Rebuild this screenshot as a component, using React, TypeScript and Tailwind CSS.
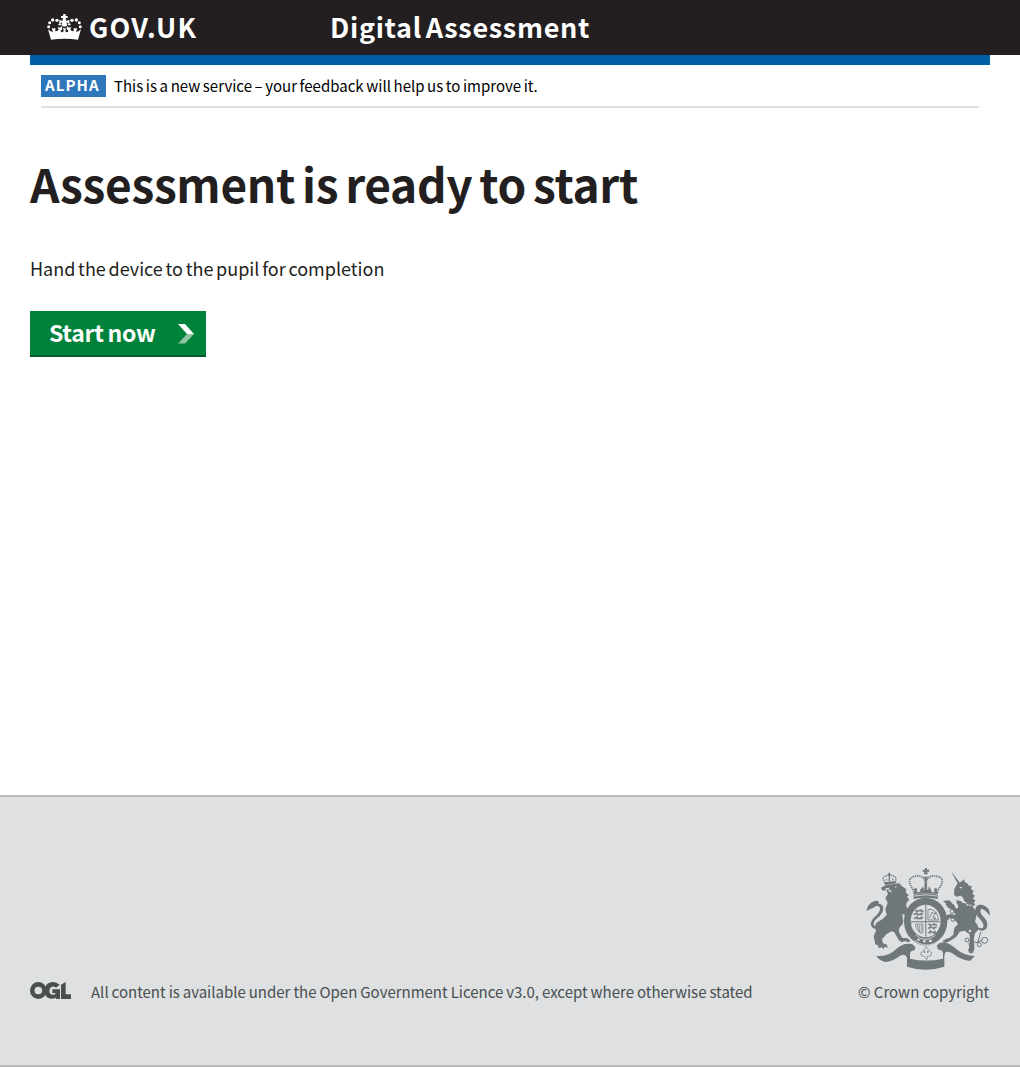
function Crown() {
  return (
    <svg viewBox="0 0 105 78" className="h-[26px] w-[35px] fill-white">
      <path d="M49 0h7v6h6v6h-6l2 9 9-4v12l-9-4 3 7q-2 6-9 6t-9-6l3-7-9 4V17l9 4 2-9h-6V6h6Z" />
      <path d="M12 77 3 45q7 9 15 9l-4-12q6 3 10-1 3 6 0 11 7 0 11-5l-3-8 7 2 5-5q3 6 1 12l-4-1q-1 7 4 8 5 0 5-8l-3-4h11l-3 4q0 8 5 8 5-1 4-8l-4 1q-2-6 1-12l5 5 7-2-3 8q4 5 11 5-3-5 0-11 4 4 10 1l-4 12q8 0 15-9l-9 32q-40-5-81 0Z" />
      <circle cx="5" cy="38" r="4.500" /><circle cx="8" cy="26" r="4.500" /><circle cx="17" cy="18" r="5" /><circle cx="30" cy="19" r="5" /><circle cx="38" cy="31" r="3.500" />
      <circle cx="100" cy="38" r="4.500" /><circle cx="97" cy="26" r="4.500" /><circle cx="88" cy="18" r="5" /><circle cx="75" cy="19" r="5" /><circle cx="67" cy="31" r="3.500" />
    </svg>
  );
}

function OglLogo() {
  return (
    <svg viewBox="0 0 123 51" className="h-[17px] w-[41px] shrink-0 fill-[#484f4f]">
      <path fillRule="evenodd" d="M25 0a25 25.500 0 1 0 0 51 25 25.500 0 0 0 0-51Zm0 14a11.500 11.500 0 1 1 0 23 11.500 11.500 0 0 1 0-23Z" />
      <path d="M89 8 78 17q-6-5-12-3-8 3-8 12 0 12 12 12 4 0 6-2v-3h-9V22h23v29H78l-1-4Q67 53 55 48 44 42 44 26 44 8 58 2 75-4 89 8Z" />
      <path d="M93 8 107 0v37h16v14H93Z" />
    </svg>
  );
}

function RoyalArms() {
  return (
    <svg viewBox="30 21 378 312" className="h-[104px] w-[126px] fill-[#6f777b]">
      {/* lion, with its small crown */}
      <g>
        <path d="M90 70 84 55q5-9 18-9 14-1 21 8l-1 13Z" fill="none" stroke="#6f777b" strokeWidth="3.500" strokeDasharray="5 2" />
        <path d="m89 67 33-4v7l-32 5ZM101 38h4v26h-4ZM98 41h10v3H98ZM92 56l5 3-2 5ZM112 54l4 4-5 5Z" />
        <path d="m83 80 12-5 38-5 8 9 13 9-2 8 9 10-5 4 7 10-7 5-3 13 10 16 9 27 7 7-4 14-14-9-12-28-7-4 1 13q6 14-5 24-9 7-5 20l9 16 16 1 9 8-8 4-9-4-10 4-9-7-13-23-9-3-15 9-13 15 3 12 12 4 2 10-9-4-3 7-6-5-9 3-1-8-9-4-5-24 7-17-4-11 5-13 19-11 12-12-4-17 7-20-7-14 8-12-5-12-11 2-5-9Z" />
        <path d="M78 203q-17 9-27-1-10-13 7-30 19-16 17-28-2-9-13-5-7 5-28 14 5-23 24-30 16-4 13 8 14 2 14 13 0 16-18 30-16 14-9 23 7 5 19-2Z" />
        <path d="m91 85 13-2-4 6 7 2 4 6-7-2-6-6-7-1ZM119 80l8-2-7 6Z" className="fill-[#dee0e2]" />
      </g>
      {/* central crown */}
      <g>
        <g fill="none" stroke="#6f777b" strokeWidth="5" strokeDasharray="4 2.500">
          <path d="M175 90Q152 57 176 50q25-8 34 12v29M249 90q25-33 1-40-26-8-36 12v29" />
        </g>
        <path d="M210 24h6v5h7v6h-7l3 8h-13l3-8h-6v-6h7ZM205 50h15v5h-5v39h-5V55h-5Z" />
        <path d="m176 103-3-11 5 4-1-8 5-5 5 5-2 9 11-2-1-5 10-11 1 10h14l1-10 8 11-1 5 11 2-2-9 5-5 5 5-1 8 5-4-3 11q-34-8-72 0Z" />
        <path d="M176 104q36-8 72 0v13q-36-8-72 0Z" />
        <path d="M178 108q34-7 68 0" fill="none" stroke="#dee0e2" strokeWidth="2.500" />
      </g>
      {/* garter and quartered shield */}
      <g>
        <ellipse cx="212" cy="184" rx="65" ry="71" />
        <ellipse cx="212" cy="183" rx="45" ry="49" className="fill-[#dee0e2]" />
        <path d="M211 135h3v95h-3ZM168 184h88v3h-88Z" />
        <g fill="none" stroke="#6f777b" strokeWidth="4">
          <path d="m180 151 7 3 9-3 10 4M176 164l8-4 7 4 14-4M176 176l9-4 8 4 12-4M220 192l8 4 9-4 9 4M219 205l9-4 7 4 10-4M220 219l7-5 10 5 6-4" />
          <path d="M186 148v33M199 147v33M225 191v33M238 191v31" strokeWidth="2" />
          <path d="M219 149v31h31q0-22-20-32ZM224 174l7-18 5 5 8-3-9 10 7 9-10-5" strokeWidth="2.500" />
          <path d="M181 192h23v26q-8 4-13-3-9-10-10-23ZM187 193q-1 16 10 25M194 193v23M200 194v21" strokeWidth="2" />
        </g>
        <path d="m176 228 12-3q22 20 48 9l5 16q-33 16-59-4-6-5-6-18Z" />
        <path d="M182 224q27 28 59 2M178 241q28 23 62 9" fill="none" stroke="#dee0e2" strokeWidth="2.500" />
        <path d="m188 235 8 4-4 4-6-2ZM204 241h8v6h-8ZM222 240l9-1-1 7-8 1Z" className="fill-[#dee0e2]" />
        <path d="M151 190q12-9 19 1l-5 10-14 3Z" />
      </g>
      {/* unicorn, with chain */}
      <g>
        <path d="m288 33 27 36-6 4ZM298 86l9-15 14-8 7-5 1 8 9 5 4 6 8 1-2 9 8 6-4 8 8 6-6 8 8 8-6 4 5 8-9 3 2 10-10-1q-22-2-41-19l8-8q11 10 21 11l-9-19-6-5-12 3-8-6Z" />
        <path d="m304 118 49 22 13 17-2 12-4 16 8 11 1 15-9 8-4 19 2 20-7 20-10-3 4-39-2-14-15-10-14 3-10 15-18 12-15 6-6-6 18-8 12-10 3-20 11-12-11-14-13-5-6 8-8-3 3-12 12-4 16 3-9-16-14-6-8-12 11-5 14 7 8 14 6-5Z" />
        <path d="m264 123 18-2 10 8-8 5-13-5ZM264 243l12-8 10 2-8 10-13 1ZM339 268l12-7 8 2-5 16-10 1Z" />
        <path d="m301 113 9 7 9-1 4 8 10 1 4 7 13 1" fill="none" stroke="#dee0e2" strokeWidth="4" strokeDasharray="6 3" />
        <path d="M313 81h9l-5 5Z" className="fill-[#dee0e2]" />
        <path d="M362 204q25 18 34-3 5-15-12-32-12-13-6-21 6-6 27 19 0-26-22-32-16-4-21 9-6 14 12 32 16 17 10 27-5 6-22-6Z" />
        <g fill="none" stroke="#6f777b" strokeWidth="3">
          <circle cx="336" cy="240" r="6" /><circle cx="348" cy="253" r="6" /><circle cx="373" cy="254" r="6" /><circle cx="389" cy="241" r="9" />
          <circle cx="291" cy="154" r="6" /><circle cx="294" cy="178" r="6" /><path d="M342 240q10-1 21 8 8-1 17-8M378 215l-10 32" />
        </g>
        <circle cx="345" cy="213" r="4" className="fill-[#dee0e2]" />
      </g>
      {/* motto ribbon */}
      <g>
        <path d="M69 288q33 2 54-20 20-21 48-16l10 9-2 10q-12 0-14 10v15q50 11 99 0v-17q-1-9-14-10l-5-11q7-12 24-10 17 2 31 16 23 22 59 24l-13 14q-18 0-38-11-23-18-35-15-5 3-5 15v29q-56 18-112 0v-27q-4-13-18-7-27 20-46 20-15-1-28-17Z" />
        <path d="m213 261 7 8-3 10 7-6 6 6-3 9-9 1-3 10-6-10-9-1-3-8 6-7 7 6-3-10Z" fill="none" stroke="#6f777b" strokeWidth="3" strokeDasharray="5 2" />
      </g>
    </svg>
  );
}

export default function App() {
  return (
    <div className="h-[1067px] bg-white font-['Noto_Sans_CJK_SC','Noto_Sans',sans-serif] text-[#231f20]">
      <header className="h-[55px] bg-[#231f20] text-white">
        <div className="flex h-[53px] items-center pl-[47px]">
          <a className="flex w-[283px] items-center gap-[7px]">
            <Crown />
            <span className="whitespace-nowrap text-[27px] leading-[52px] font-bold tracking-[1.2px]">GOV.UK</span>
          </a>
          <span className="whitespace-nowrap text-[27px] leading-[52px] font-bold tracking-[0.7px] [word-spacing:-3px]">Digital Assessment</span>
        </div>
      </header>
      <main className="mx-[30px] h-[740px]">
        <div className="h-[10px] bg-[#005ea5]" />
        <div className="mx-[11px] flex h-[43px] gap-2 border-b-2 border-[#dee0e2] pt-[10px] text-black">
          <strong className="h-[22px] w-[65px] bg-[#2e77bb] pl-1 text-[15px] leading-[20px] font-bold tracking-[1.1px] text-white">ALPHA</strong>
          <span className="whitespace-nowrap text-[15px] leading-[21px] [word-spacing:-0.750px]">This is a new service – your feedback will help us to improve it.</span>
        </div>
        <h1 className="mt-[50px] whitespace-nowrap text-[46px] leading-[50px] font-bold tracking-[-0.3px] [word-spacing:-3.200px]">Assessment is ready to start</h1>
        <p className="mt-[48px] whitespace-nowrap text-[18px] leading-[25px] [word-spacing:-1.300px]">Hand the device to the pupil for completion</p>
        <button className="mt-[30px] flex h-[46px] w-[176px] items-center border-b-2 border-[#005a29] bg-[#00823b] pl-[19px] text-white">
          <span className="w-[129px] whitespace-nowrap pb-[2px] text-left text-[23px] leading-[42px] font-bold tracking-[-0.3px] [word-spacing:-1px]">Start now</span>
          <svg viewBox="0 0 16 20" className="mt-[2px] h-5 w-4">
            <path d="M0 0h7l9 10H9Z" fill="#fff" />
            <path d="M9 10h7l-9 9.500H0Z" fill="#8dc5a3" />
          </svg>
        </button>
      </main>
      <footer className="flex h-[272px] items-end justify-between border-y-2 border-[#b8babc] bg-[#dee0e2] px-[30px] pb-[61px] text-base text-[#484f4f]">
        <div className="flex items-end gap-5">
          <div className="pb-[5px]"><OglLogo /></div>
          <span className="whitespace-nowrap text-[15px] leading-6 [word-spacing:-0.4px]">All content is available under the Open Government Licence v3.0, except where otherwise stated</span>
        </div>
        <div className="flex w-[132px] flex-col">
          <div className="ml-[7px] h-[113px]"><RoyalArms /></div>
          <span className="whitespace-nowrap text-[15px] leading-6">© Crown copyright</span>
        </div>
      </footer>
    </div>
  );
}
